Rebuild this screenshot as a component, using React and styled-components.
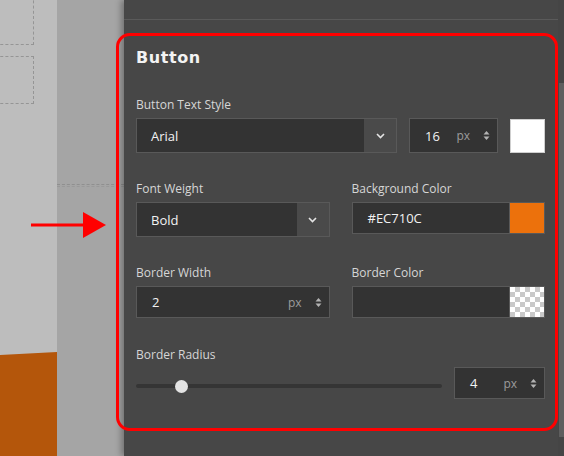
import React from 'react'
import styled, { createGlobalStyle } from 'styled-components'

const GlobalStyle = createGlobalStyle`
  html, body { margin: 0; padding: 0; }
  body {
    width: 564px;
    height: 456px;
    overflow: hidden;
    background: #474747;
    font-family: "Open Sans", "Noto Sans", sans-serif;
  }
  * { box-sizing: border-box; }
`

const Screen = styled.div`
  position: relative;
  display: flex;
  width: 564px;
  height: 456px;
  overflow: hidden;
`

/* ---- design canvas on the left ---- */
const Canvas = styled.div`
  display: flex;
  width: 124px;
  flex-shrink: 0;
`
const Page = styled.div`
  position: relative;
  width: 57px;
  background: #bdbdbd;
`
const Margin = styled.div`
  position: relative;
  flex: 1;
  background: #a5a5a5;
`
const Frame = styled.div`
  position: absolute;
  left: -10px;
  right: 23px;
  top: ${p => p.$top}px;
  height: ${p => p.$h}px;
  border: 1px dashed #959595;
`
const Guide = styled.div`
  position: absolute;
  left: 0;
  right: 0;
  top: 184px;
  height: 3px;
  border-top: 1px dashed #8f8f8f;
  border-bottom: 1px dashed #999;
`
const OrangeBlock = styled.div`
  position: absolute;
  left: 0;
  right: 0;
  top: 352px;
  bottom: 0;
  background: #b4560b;
  clip-path: polygon(0 3px, 100% 0, 100% 100%, 0 100%);
`

/* ---- properties panel ---- */
const Panel = styled.div`
  flex: 1;
  display: flex;
  background: #474747;
  box-shadow: -3px 0 6px rgba(0, 0, 0, 0.3);
  z-index: 1;
`
const Body = styled.div`
  flex: 1;
  display: flex;
  flex-direction: column;
`
const TopBar = styled.div`
  height: 20px;
  flex-shrink: 0;
  border-bottom: 1px solid #5a5a5a;
`
const Content = styled.div`
  display: flex;
  flex-direction: column;
  padding: 28px 13px 0 12px;
`
const Scrollbar = styled.div`
  width: 6px;
  padding: 83px 0 0 1px;
  background: #454545;
`
const ScrollThumb = styled.div`
  height: 354px;
  background: #5e5e5e;
`
const Heading = styled.h2`
  margin: 0;
  font-family: "DejaVu Sans", Verdana, sans-serif;
  font-weight: 700;
  font-size: 16px;
  line-height: 20px;
  letter-spacing: 0.6px;
  color: #f3f3f3;
`
const Field = styled.div`
  display: flex;
  flex-direction: column;
  gap: ${p => p.$gap || 5}px;
  margin-top: ${p => p.$mt || 0}px;
`
const Label = styled.div`
  font-size: 12px;
  line-height: 16px;
  color: #d6d6d6;
`
const Row = styled.div`
  display: grid;
  grid-template-columns: ${p => p.$cols};
  gap: 12px;
  align-items: start;
`
const Pair = styled.div`
  display: grid;
  grid-template-columns: 1fr 1fr;
  column-gap: 22px;
  margin-top: ${p => p.$mt}px;
`
const Box = styled.div`
  display: flex;
  align-items: center;
  height: ${p => p.$h || 32}px;
  background: #333333;
  border: 1px solid #595959;
  color: #f2f2f2;
  font-size: 13px;
`
const Value = styled.span`
  flex: 1;
  padding-left: ${p => p.$pad || 14}px;
`
const Caret = styled.div`
  display: flex;
  align-items: center;
  justify-content: center;
  width: 32px;
  align-self: stretch;
  background: #4a4a4a;
`
const Unit = styled.span`
  font-size: 12px;
  color: #9c9c9c;
  margin-right: 13px;
`
const Spin = styled.svg`
  margin-right: 7px;
`
const Swatch = styled.div`
  width: 35px;
  align-self: stretch;
  background: ${p => p.$color};
  border-left: 1px solid #595959;
`
const Checker = styled(Swatch)`
  background: repeating-conic-gradient(#c9c9c9 0 25%, #ffffff 0 50%) 0 0 / 10px 10px;
`
const WhiteSwatch = styled.div`
  height: 34px;
  margin-top: 1px;
  background: #ffffff;
  border: 1px solid #cfcfcf;
`
const SliderWrap = styled.div`
  position: relative;
  height: 32px;
  display: flex;
  align-items: center;
  padding-top: 6px;
`
const Track = styled.div`
  position: relative;
  flex: 1;
  height: 4px;
  border-radius: 2px;
  background: #353535;
`
const Knob = styled.div`
  position: absolute;
  top: -4.5px;
  width: 13px;
  height: 13px;
  border-radius: 50%;
  background: #e3e3e3;
`

/* ---- annotation overlays ---- */
const Highlight = styled.div`
  position: absolute;
  left: 116px;
  top: 33px;
  width: 442px;
  height: 398px;
  border: 3px solid #ff0000;
  border-radius: 14px;
  z-index: 2;
  pointer-events: none;
`
const Arrow = styled.svg`
  position: absolute;
  left: 30px;
  top: 211px;
  z-index: 2;
`

const Chevron = () => (
  <svg width="9" height="6" viewBox="0 0 9 6">
    <polyline points="1,1 4.5,4.5 8,1" fill="none" stroke="#e4e4e4" strokeWidth="1.6" />
  </svg>
)

const Spinner = () => (
  <Spin width="7" height="11" viewBox="0 0 7 11">
    <polygon points="0.5,4.5 3.5,1 6.5,4.5" fill="#b3b3b3" />
    <polygon points="0.5,6.5 3.5,10 6.5,6.5" fill="#b3b3b3" />
  </Spin>
)

const Select = ({ value }) => (
  <Box $h={35}>
    <Value>{value}</Value>
    <Caret><Chevron /></Caret>
  </Box>
)

const NumberBox = ({ value, h }) => (
  <Box $h={h}>
    <Value $pad={15}>{value}</Value>
    <Unit>px</Unit>
    <Spinner />
  </Box>
)

export default function App() {
  const radius = 4
  const knobLeft = Math.round((radius / 30) * 293)
  return (
    <Screen>
      <GlobalStyle />
      <Canvas>
        <Page>
          <Frame $top={-10} $h={55} />
          <Frame $top={56} $h={48} />
          <OrangeBlock />
        </Page>
        <Margin>
          <Guide />
        </Margin>
      </Canvas>

      <Panel>
        <Body>
          <TopBar />
          <Content>
            <Heading>Button</Heading>

            <Field $mt={29}>
              <Label>Button Text Style</Label>
              <Row $cols="261px 89px 35px">
                <Select value="Arial" />
                <NumberBox value="16" h={35} />
                <WhiteSwatch />
              </Row>
            </Field>

            <Pair $mt={28}>
              <Field>
                <Label>Font Weight</Label>
                <Select value="Bold" />
              </Field>
              <Field>
                <Label>Background Color</Label>
                <Box>
                  <Value $pad={15}>#EC710C</Value>
                  <Swatch $color="#ec710c" />
                </Box>
              </Field>
            </Pair>

            <Pair $mt={28}>
              <Field>
                <Label>Border Width</Label>
                <NumberBox value="2" />
              </Field>
              <Field>
                <Label>Border Color</Label>
                <Box>
                  <Value />
                  <Checker />
                </Box>
              </Field>
            </Pair>

            <Field $mt={29} $gap={4}>
              <Label>Border Radius</Label>
              <Row $cols="306px 91px">
                <SliderWrap>
                  <Track>
                    <Knob style={{ left: knobLeft }} />
                  </Track>
                </SliderWrap>
                <NumberBox value={radius} />
              </Row>
            </Field>
          </Content>
        </Body>
        <Scrollbar>
          <ScrollThumb />
        </Scrollbar>
      </Panel>

      <Highlight />
      <Arrow width="78" height="28" viewBox="0 0 78 28">
        <line x1="1" y1="14" x2="56" y2="14" stroke="#ff0000" strokeWidth="3" />
        <polygon points="53,1 76,14 53,27" fill="#ff0000" />
      </Arrow>
    </Screen>
  )
}
